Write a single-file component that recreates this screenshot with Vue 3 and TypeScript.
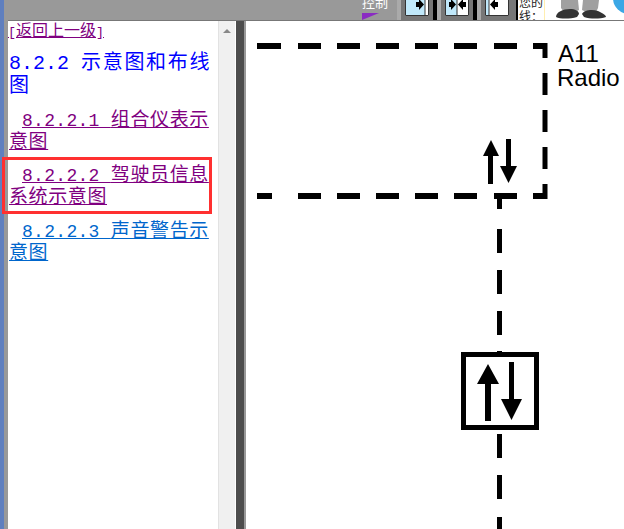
<template>
  <div class="page">
    <div class="edge"></div>
    <div class="main">
      <header class="topbar">
        <div class="control">
          <span class="control-text">控制</span>
          <span class="control-flag"></span>
        </div>
        <div v-for="(btn, i) in buttons" :key="i" class="tool" :class="{ last: i === buttons.length - 1 }">
          <svg width="24" height="16" viewBox="0 0 24 16">
            <rect width="24" height="16" fill="#c0e8fa" />
            <rect :x="btn.divider" width="24" height="16" fill="#fff" />
            <path :d="`M${btn.divider} 0V16M0.500 0V15.500H23.500V0`" fill="none" stroke="#333" />
            <path :d="btn.arrows" fill="#000" />
          </svg>
        </div>
        <div class="promo">
          <div class="notice"><span>您的</span><span>线：</span></div>
          <svg width="79" height="20" viewBox="545 0 79 20">
            <path d="M561 0H578L579 10L575 12H564L561 8Z" fill="#a0a0a0" />
            <path d="M583 0H599L598 8L596 12H586L582 10Z" fill="#a0a0a0" />
            <path d="M556 17C556 12 563 9 570 9C575 9 579 11 579 14L577 17C570 19 560 19 556 17Z" fill="#333" />
            <path d="M582 14C584 10 592 9 598 11C602 13 606 15 606 17C600 19 590 19 584 17Z" fill="#333" />
            <circle cx="629" cy="-2" r="16" fill="#3ba7e5" />
          </svg>
        </div>
      </header>
      <div class="panes">
        <nav class="nav">
          <a class="back" href="#"><span class="bracket">[</span>返回上一级<span class="bracket">]</span></a>
          <h2 class="heading">
            <span class="num">8.2.2&nbsp;</span><span class="cjk">示意图和布线图</span>
          </h2>
          <p v-for="item in items" :key="item.num" class="entry" :class="{ selected: item.selected }">
            <a :class="item.tone" href="#"><span class="num">{{ item.num }}&nbsp;</span><span class="cjk">{{ item.name }}</span></a>
          </p>
        </nav>
        <div class="scrollbar"><span class="up"></span></div>
        <div class="splitter"></div>
        <section class="diagram">
          <svg width="378" height="508" viewBox="246 21 378 508">
            <path
              class="wire"
              d="M257 46H281M298 46H321M337 46H360M376 46H399M415 46H438M454 46H477M494 46H517M533 46H545
                 M257 196H272M298 196H321M337 196H360M376 196H399M415 196H438M454 196H477M494 196H517M533 196H545"
            />
            <path class="wire thin" d="M545 43V58M545 73V95M545 110V132M545 147V169M545 184V199" />
            <path class="wire thin" d="M499.500 196V209M499.500 229V253M499.500 270V294M499.500 311V335M499.500 351V354M499.500 434V458M499.500 475V499M499.500 517V529" />
            <rect x="463.500" y="354.500" width="73" height="73" fill="#fff" stroke="#000" stroke-width="5" />
            <path d="M491 140L499 156H493V184H488V156H483Z" fill="#000" />
            <path d="M506 139H511V166H517L508.500 183L500 166H506Z" fill="#000" />
            <path d="M488 364L499 384H491V421H485V384H477Z" fill="#000" />
            <path d="M509 362H514V399H522L511.500 420L501 399H509Z" fill="#000" />
            <text x="558" y="62" class="label">A11</text>
            <text x="557" y="86" class="label">Radio</text>
          </svg>
        </section>
      </div>
    </div>
  </div>
</template>

<script setup lang="ts">
interface NavItem {
  num: string
  name: string
  tone: string
  selected?: boolean
}

interface ToolButton {
  divider: number
  arrows: string
}

const items: NavItem[] = [
  { num: '8.2.2.1', name: '组合仪表示意图', tone: 'visited' },
  { num: '8.2.2.2', name: '驾驶员信息系统示意图', tone: 'visited', selected: true },
  { num: '8.2.2.3', name: '声音警告示意图', tone: 'link' },
]

const buttons: ToolButton[] = [
  { divider: 20, arrows: 'M11 2H14V-1L19 4.500L14 10V7H11Z' },
  { divider: 12, arrows: 'M4 2H6V-1L11 4.500L6 10V7H4ZM13 4.500L18 -1V2H21V7H18V10Z' },
  { divider: 4, arrows: 'M5 4.500L10 -1V2H13V7H10V10Z' },
]
</script>

<style>
html,
body {
  margin: 0;
  background: #fff;
}
</style>

<style scoped>
.page {
  display: flex;
  width: 624px;
  height: 529px;
  overflow: hidden;
  font-family: "Noto Sans CJK SC", "Liberation Serif", serif;
}

.edge {
  width: 8px;
  flex: none;
  box-sizing: border-box;
  background: #999;
  border-left: 4px solid #5f7fbf;
}

.main {
  flex: 1;
  display: flex;
  flex-direction: column;
  min-width: 0;
}

.topbar {
  height: 21px;
  flex: none;
  display: flex;
  box-sizing: border-box;
  padding-left: 352px;
  overflow: hidden;
  background: #999;
  border-bottom: 1px solid #777;
}

.control {
  width: 37px;
  position: relative;
}

.control-text {
  position: absolute;
  top: -7px;
  left: 2px;
  font-size: 13px;
  line-height: 18px;
  color: #fff;
  white-space: nowrap;
}

.control-flag {
  position: absolute;
  left: 2px;
  top: 13px;
  width: 0;
  height: 0;
  border-left: 17px solid #8a2bc2;
  border-bottom: 7px solid transparent;
}

.tool {
  display: flex;
  height: 20px;
  padding: 0 4px;
  background: #777;
  border-left: 4px solid #aaa;
  border-right: 4px solid #000;
}

.tool.last {
  padding-right: 7px;
  border-right-width: 2px;
}

.tool svg {
  display: block;
}

.promo {
  flex: 1;
  display: flex;
  background: #fff;
}

.notice {
  width: 27px;
  flex: none;
  box-sizing: border-box;
  display: flex;
  flex-direction: column;
  margin-top: -5px;
  padding-left: 1px;
  font-size: 12px;
  line-height: 14px;
  color: #222;
  border-right: 1px solid #ffeeb0;
}

.promo svg {
  display: block;
}

.panes {
  flex: 1;
  display: flex;
  min-height: 0;
}

.nav {
  width: 210px;
  flex: none;
  box-sizing: border-box;
  padding-left: 1px;
  background: #fff;
}

.back {
  display: block;
  width: max-content;
  margin: -1px 0 0 -1px;
  font-size: 16px;
  line-height: 18px;
  color: #800080;
  text-decoration: underline;
}

.bracket {
  font-family: "Liberation Mono", monospace;
  font-size: 13.330px;
  line-height: 0;
}

.num,
.cjk {
  line-height: 0;
}

.num {
  font-family: "Liberation Mono", monospace;
}

.heading {
  margin: 11px 0 0;
  font-size: 20px;
  line-height: 23px;
  font-weight: 400;
  color: #00f;
}

.heading .cjk {
  letter-spacing: 1.700px;
}

.entry {
  width: 205px;
  margin: 12px 0 0;
  font-size: 18px;
  line-height: 22px;
  text-indent: 13px;
}

.entry .num {
  letter-spacing: 0.300px;
}

.entry .cjk {
  font-size: 19px;
  letter-spacing: 0.600px;
}

.entry.selected {
  position: relative;
  margin-top: 11px;
}

.entry.selected::after {
  content: "";
  position: absolute;
  top: -5px;
  bottom: -8px;
  left: -7px;
  right: 2px;
  border: 3px solid #ff3030;
}

.entry a {
  text-decoration: underline;
}

.visited {
  color: #800080;
}

.link {
  color: #0066cc;
}

.scrollbar {
  width: 18px;
  flex: none;
  box-sizing: border-box;
  display: flex;
  justify-content: center;
  padding-top: 8px;
  background: #f0f0f0;
  border-left: 1px solid #e2e2e2;
  border-right: 1px solid #fff;
}

.up {
  width: 0;
  height: 0;
  border-left: 4px solid transparent;
  border-right: 4px solid transparent;
  border-bottom: 4px solid #888;
}

.splitter {
  width: 10px;
  flex: none;
  box-sizing: border-box;
  background: #4d4d4d;
  border-right: 2px solid #999;
}

.diagram {
  flex: 1;
  min-width: 0;
  background: #fff;
}

.diagram svg {
  display: block;
}

.wire {
  fill: none;
  stroke: #000;
  stroke-width: 6;
}

.wire.thin {
  stroke-width: 5;
}

.label {
  font-family: "Liberation Sans", sans-serif;
  font-size: 24px;
  fill: #000;
}
</style>
